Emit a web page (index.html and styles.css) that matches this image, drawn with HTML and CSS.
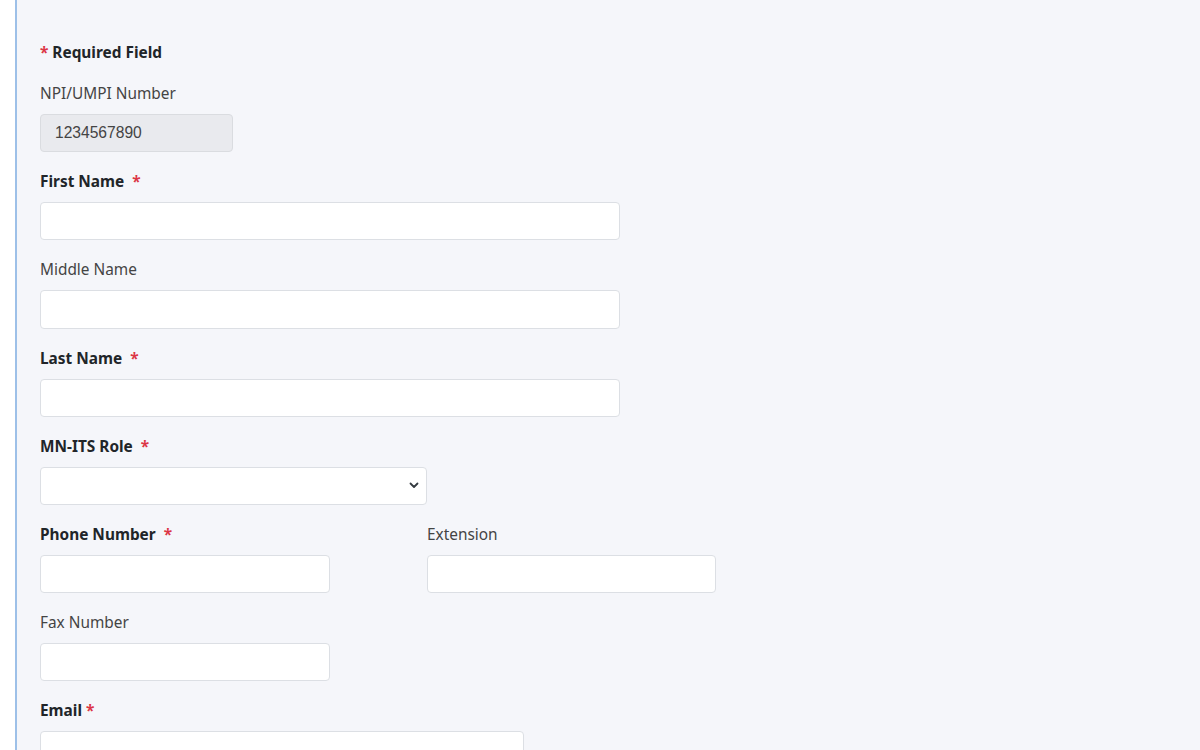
FILE: index.html
```html
<!DOCTYPE html>
<html>
<head>
<meta charset="utf-8">
<link rel="stylesheet" href="styles.css">
</head>
<body>
<div class="page">
  <div class="panel">
    <form class="form">
      <p class="req-note"><span class="star">*</span> Required Field</p>

      <div class="field">
        <label class="lbl">NPI/UMPI Number</label>
        <input class="ctl w2 disabled" type="text" value="1234567890" disabled>
      </div>

      <div class="field">
        <label class="lbl bold">First Name <span class="star sp">*</span></label>
        <input class="ctl w6" type="text">
      </div>

      <div class="field">
        <label class="lbl">Middle Name</label>
        <input class="ctl w6" type="text">
      </div>

      <div class="field">
        <label class="lbl bold">Last Name <span class="star sp">*</span></label>
        <input class="ctl w6" type="text">
      </div>

      <div class="field">
        <label class="lbl bold">MN-ITS Role <span class="star sp">*</span></label>
        <div class="ctl w4 select">
          <svg class="chev" width="10" height="7" viewBox="0 0 10 7"><path d="M1.5 1.5 L5 5 L8.5 1.5" fill="none" stroke="#343a40" stroke-width="1.8" stroke-linecap="round" stroke-linejoin="round"/></svg>
        </div>
      </div>

      <div class="row">
        <div class="field col">
          <label class="lbl bold">Phone Number <span class="star sp">*</span></label>
          <input class="ctl w3" type="text">
        </div>
        <div class="field col">
          <label class="lbl">Extension</label>
          <input class="ctl w3b" type="text">
        </div>
      </div>

      <div class="field">
        <label class="lbl">Fax Number</label>
        <input class="ctl w3" type="text">
      </div>

      <div class="field">
        <label class="lbl bold">Email <span class="star">*</span></label>
        <input class="ctl w5" type="text">
      </div>
    </form>
  </div>
</div>
</body>
</html>
```

FILE: styles.css
```css
html, body {
  margin: 0;
  padding: 0;
  background: #ffffff;
  height: 100%;
  overflow: hidden;
}
body {
  font-family: "Noto Sans", "Open Sans", "Liberation Sans", sans-serif;
  color: #333;
}
.page {
  padding-left: 15px;
  height: 100%;
}
.panel {
  border-left: 2px solid #9dc0e8;
  background: #f5f6fa;
  height: 100%;
  padding: 42px 0 0 23px;
  box-sizing: border-box;
}
.form {
  margin: 0;
}
.req-note {
  margin: 0 0 19px 0;
  font-size: 15.4px;
  line-height: 22px;
  font-weight: 700;
  color: #212529;
}
.star {
  color: #dc3545;
  font-weight: 700;
}
.sp {
  margin-left: 4px;
}
.field {
  display: flex;
  flex-direction: column;
  align-items: flex-start;
  margin-bottom: 19px;
}
.lbl {
  font-size: 15.4px;
  line-height: 22px;
  color: #444;
  margin-bottom: 9px;
}
.lbl.bold {
  font-weight: 700;
  color: #212529;
}
.ctl {
  box-sizing: border-box;
  height: 38.2px;
  border: 1px solid #dcdfe4;
  border-radius: 4px;
  background: #fff;
  padding: 0 14px;
  font-family: "Liberation Sans", Arial, sans-serif;
  font-size: 15.6px;
  color: #444;
  margin: 0;
  outline: none;
}
.ctl.disabled {
  background: #e9eaee;
  border-color: #dadce0;
  color: #444;
  opacity: 1;
  -webkit-text-fill-color: #444;
}
.w2 { width: 193px; }
.w3 { width: 290px; }
.w3b { width: 289px; }
.w4 { width: 387px; }
.w5 { width: 484px; }
.w6 { width: 580px; }
.select {
  display: flex;
  align-items: center;
  justify-content: flex-end;
  padding-right: 7px;
}
.chev {
  display: block;
}
.row {
  display: flex;
}
.col {
  width: 387px;
}
```
